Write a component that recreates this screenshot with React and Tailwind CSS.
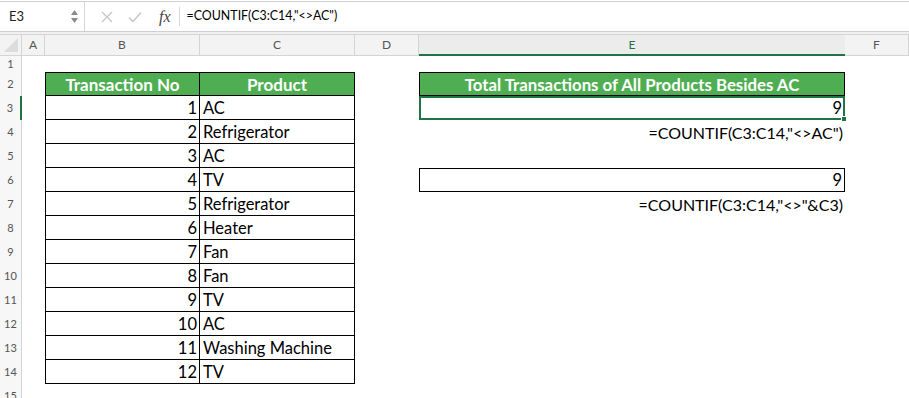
import React from "react";

const cols = ["A", "B", "C", "D", "E", "F"];

const rows = [
  [1, "AC"],
  [2, "Refrigerator"],
  [3, "AC"],
  [4, "TV"],
  [5, "Refrigerator"],
  [6, "Heater"],
  [7, "Fan"],
  [8, "Fan"],
  [9, "TV"],
  [10, "AC"],
  [11, "Washing Machine"],
  [12, "TV"],
];

const sheetFont = { fontFamily: "Lato, 'Open Sans', sans-serif" };

const RowHead = ({ n, active }) => (
  <div
    className={`flex items-center justify-center border-r border-[#d4d4d4] bg-[#f7f7f7] text-[11px] text-[#555] ${
      active ? "border-r-2 border-r-[#217346]" : ""
    }`}
  >
    {n}
  </div>
);

const FormulaBar = () => (
  <div className="flex h-[31px] items-center border-t border-b border-[#cfcfcf] bg-white mt-[1px]">
    <div className="flex h-full w-[85px] items-center border-r border-[#d6d6d6] pl-[9px] pr-[6px]">
      <span className="flex-1 text-[13px] text-[#222]">E3</span>
      <div className="flex flex-col items-center gap-[3px]">
        <svg width="7" height="5" viewBox="0 0 7 5">
          <path d="M3.5 0 L7 5 L0 5 Z" fill="#8a8a8a" />
        </svg>
        <svg width="7" height="5" viewBox="0 0 7 5">
          <path d="M0 0 L7 0 L3.5 5 Z" fill="#8a8a8a" />
        </svg>
      </div>
    </div>
    <div className="flex items-center pl-[14px]">
      <svg width="12" height="12" viewBox="0 0 12 12" className="ml-[2px]">
        <path d="M1 1 L11 11 M11 1 L1 11" stroke="#c4c4c4" strokeWidth="1.3" />
      </svg>
      <svg width="14" height="12" viewBox="0 0 14 12" className="ml-[15px]">
        <path d="M1 6.5 L5 10.5 L13 1.5" stroke="#c4c4c4" strokeWidth="1.3" fill="none" />
      </svg>
      <span
        className="ml-[17px] text-[16px] italic text-[#444]"
        style={{ fontFamily: "'Liberation Serif', serif" }}
      >
        fx
      </span>
      <div className="ml-[8px] h-[19px] w-px bg-[#d6d6d6]" />
    </div>
    <span className="ml-[7px] text-[12.4px] text-black">=COUNTIF(C3:C14,"&lt;&gt;AC")</span>
  </div>
);

export default function App() {
  return (
    <div className="h-[398px] w-[909px] overflow-hidden bg-white" style={sheetFont}>
      <FormulaBar />
      <div className="h-[2px] bg-[#f0f0f0]" />
      <div className="grid grid-cols-[22px_23px_155px_155px_64px_426px_64px] grid-rows-[22px_16px_repeat(14,24px)]">
        {/* column headers */}
        <div className="relative border-t border-b border-r border-[#d4d4d4] bg-[#f3f3f3]">
          <svg width="14" height="14" viewBox="0 0 14 14" className="absolute bottom-[3px] right-[3px]">
            <path d="M14 0 L14 14 L0 14 Z" fill="#dcdcdc" />
          </svg>
        </div>
        {cols.map((c) => (
          <div
            key={c}
            className={`flex items-center justify-center border-t border-[#d4d4d4] text-[12px] ${
              c === "E"
                ? "border-b-2 border-b-[#217346] bg-[#ececec] text-[#217346]"
                : "border-b border-r bg-[#f3f3f3] text-[#555]"
            }`}
          >
            {c}
          </div>
        ))}

        {/* row 1 */}
        <RowHead n={1} />
        <div className="col-span-6" />

        {/* row 2 */}
        <RowHead n={2} />
        <div />
        <div className="flex items-center justify-center border border-black bg-[#4fae52] pt-[1px] text-[17px] font-bold text-white">
          Transaction No
        </div>
        <div className="flex items-center justify-center border-y border-r border-black bg-[#4fae52] pt-[1px] text-[17px] font-bold text-white">
          Product
        </div>
        <div />
        <div className="flex items-center justify-center border border-black bg-[#4fae52] pt-[1px] text-[16.8px] font-bold text-white">
          Total Transactions of All Products Besides AC
        </div>
        <div />

        {rows.map(([no, product], i) => {
          const r = i + 3;
          return (
            <React.Fragment key={r}>
              <RowHead n={r} active={r === 3} />
              <div />
              <div className="flex items-center justify-end border-x border-b border-black pr-[2px] pt-[1px] text-[16.5px] text-black">
                {no}
              </div>
              <div className="flex items-center border-r border-b border-black pl-[3px] pt-[1px] text-[16.5px] text-black">
                {product}
              </div>
              <div />
              {r === 3 && (
                <div className="relative flex items-center justify-end border-2 border-[#217346] pr-[1px] pt-[1px] text-[16.5px] text-black">
                  9
                  <div className="absolute -bottom-[4px] -right-[4px] h-[6px] w-[6px] border border-white bg-[#217346]" />
                </div>
              )}
              {r === 4 && (
                <div className="flex items-center justify-end pr-[2px] pt-[1px] text-[16px] text-black">
                  =COUNTIF(C3:C14,"&lt;&gt;AC")
                </div>
              )}
              {r === 6 && (
                <div className="flex items-center justify-end border border-black pr-[2px] pt-[1px] text-[16.5px] text-black">
                  9
                </div>
              )}
              {r === 7 && (
                <div className="flex items-center justify-end pr-[2px] pt-[1px] text-[16px] text-black">
                  =COUNTIF(C3:C14,"&lt;&gt;"&amp;C3)
                </div>
              )}
              {![3, 4, 6, 7].includes(r) && <div />}
              <div />
            </React.Fragment>
          );
        })}

        <RowHead n={15} />
        <div className="col-span-6" />
      </div>
    </div>
  );
}
